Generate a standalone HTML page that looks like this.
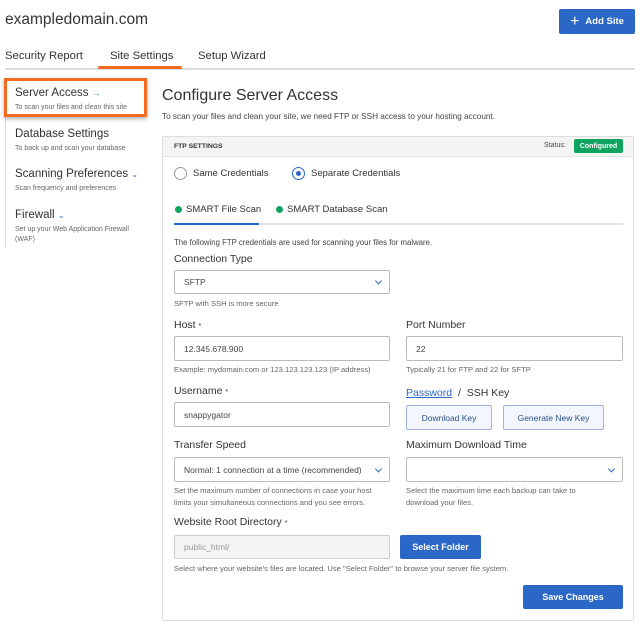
<!DOCTYPE html>
<html><head><meta charset="utf-8"><style>
*{box-sizing:border-box;margin:0;padding:0}
body{width:640px;height:625px;background:#fff;font-family:"Liberation Sans",sans-serif;color:#333;position:relative;overflow:hidden}
.a{position:absolute;white-space:nowrap}
.lbl{font-size:10.5px;color:#333}
.hint{font-size:7.6px;color:#666}
.inp{position:absolute;border:1px solid #bbb;border-radius:2px;background:#fff;font-size:8.5px;color:#444;padding-left:9px;display:flex;align-items:center}
.chev{position:absolute;right:8px;top:50%;width:5px;height:5px;border-right:1.2px solid #2b67c6;border-bottom:1.2px solid #2b67c6;transform:translateY(-70%) rotate(45deg)}
.btn{position:absolute;background:#2b67c6;color:#fff;font-size:9px;font-weight:bold;display:flex;align-items:center;justify-content:center;border-radius:2px}
.obtn{position:absolute;background:#f3f7fd;border:1px solid #9bb5e0;color:#2a4f8a;font-size:8.5px;display:flex;align-items:center;justify-content:center;border-radius:2px}
.nt{font-size:11.5px;color:#333}
.ns{font-size:7px;color:#666}
</style></head><body>
<div class="a" style="left:5px;top:11px;font-size:15.5px;color:#333">exampledomain.com</div>
<div class="btn" style="left:559px;top:9px;width:76px;height:25px;font-size:9.5px"><span style="font-size:16px;font-weight:normal;margin-right:6px">+</span>Add Site</div>
<div class="a" style="left:5px;top:50px;font-size:11.3px">Security Report</div>
<div class="a" style="left:110px;top:50px;font-size:11.3px">Site Settings</div>
<div class="a" style="left:198px;top:50px;font-size:11.3px">Setup Wizard</div>
<div class="a" style="left:5px;top:68px;width:630px;height:2px;background:#ddd"></div>
<div class="a" style="left:98px;top:66px;width:84px;height:3px;background:#f26b21;border-radius:2px"></div>
<div class="a" style="left:5px;top:117px;width:1px;height:130px;background:#ddd"></div>
<div class="a" style="left:4px;top:78px;width:143px;height:39px;border:3px solid #f26b21;box-shadow:0 2px 4px rgba(0,0,0,.3)"></div>
<div class="a nt" style="left:15px;top:87px">Server Access <span style="color:#5b86cf;font-size:9px">→</span></div>
<div class="a ns" style="left:15px;top:104px">To scan your files and clean this site</div>
<div class="a nt" style="left:15px;top:128px">Database Settings</div>
<div class="a ns" style="left:15px;top:145px">To back up and scan your database</div>
<div class="a nt" style="left:15px;top:168px">Scanning Preferences <span style="color:#2b67c6;font-size:8px">⌄</span></div>
<div class="a ns" style="left:15px;top:185px">Scan frequency and preferences</div>
<div class="a nt" style="left:15px;top:209px">Firewall <span style="color:#2b67c6;font-size:8px">⌄</span></div>
<div class="a ns" style="left:15px;top:226px">Set up your Web Application Firewall</div>
<div class="a ns" style="left:15px;top:236px">(WAF)</div>

<div class="a" style="left:162px;top:87px;font-size:16px;color:#333">Configure Server Access</div>
<div class="a" style="left:162px;top:112px;font-size:8.2px;color:#444">To scan your files and clean your site, we need FTP or SSH access to your hosting account.</div>
<div class="a" style="left:162px;top:136px;width:472px;height:485px;border:1px solid #ddd;border-radius:2px"></div>
<div class="a" style="left:163px;top:137px;width:470px;height:20px;background:#f4f4f4;border-bottom:1px solid #e2e2e2"></div>
<div class="a" style="left:174px;top:143px;font-size:6.8px;font-weight:bold;color:#333">FTP SETTINGS</div>
<div class="a" style="left:544px;top:142px;font-size:7px;color:#444">Status:</div>
<div class="a" style="left:574px;top:139px;width:49px;height:14px;background:#0ea45f;border-radius:2px;color:#fff;font-size:7px;font-weight:bold;text-align:center;line-height:15px">Configured</div>

<div class="a" style="left:174px;top:167px;width:13px;height:13px;border:1px solid #999;border-radius:50%"></div>
<div class="a" style="left:193px;top:168px;font-size:9.5px">Same Credentials</div>
<div class="a" style="left:292px;top:167px;width:13px;height:13px;border:1.5px solid #2b67c6;border-radius:50%"><div style="position:absolute;left:2.5px;top:2.5px;width:5px;height:5px;border-radius:50%;background:#2b67c6"></div></div>
<div class="a" style="left:311px;top:168px;font-size:9.5px">Separate Credentials</div>

<div class="a" style="left:175px;top:206px;width:7px;height:7px;background:#0ea45f;border-radius:50%"></div>
<div class="a" style="left:186px;top:204px;font-size:9.5px">SMART File Scan</div>
<div class="a" style="left:276px;top:206px;width:7px;height:7px;background:#0ea45f;border-radius:50%"></div>
<div class="a" style="left:287px;top:204px;font-size:9.5px">SMART Database Scan</div>
<div class="a" style="left:174px;top:223px;width:449px;height:2px;background:#e4e4e4"></div>
<div class="a" style="left:174px;top:223px;width:85px;height:2px;background:#2b67c6"></div>

<div class="a" style="left:174px;top:238px;font-size:7.8px;color:#444">The following FTP credentials are used for scanning your files for malware.</div>
<div class="a lbl" style="left:174px;top:253px">Connection Type</div>
<div class="inp" style="left:174px;top:270px;width:216px;height:24px">SFTP<span class="chev"></span></div>
<div class="a hint" style="left:174px;top:299px">SFTP with SSH is more secure</div>

<div class="a lbl" style="left:174px;top:319px">Host <span style="font-size:7px">*</span></div>
<div class="inp" style="left:174px;top:336px;width:216px;height:25px">12.345.678.900</div>
<div class="a hint" style="left:174px;top:365px">Example: mydomain.com or 123.123.123.123 (IP address)</div>
<div class="a lbl" style="left:406px;top:319px">Port Number</div>
<div class="inp" style="left:406px;top:336px;width:217px;height:25px">22</div>
<div class="a hint" style="left:406px;top:365px">Typically 21 for FTP and 22 for SFTP</div>

<div class="a lbl" style="left:174px;top:385px">Username <span style="font-size:7px">*</span></div>
<div class="inp" style="left:174px;top:402px;width:216px;height:25px">snappygator</div>
<div class="a lbl" style="left:406px;top:387px"><span style="color:#2b67c6;text-decoration:underline">Password</span> &nbsp;/ &nbsp;SSH Key</div>
<div class="obtn" style="left:406px;top:405px;width:86px;height:25px">Download Key</div>
<div class="obtn" style="left:503px;top:405px;width:101px;height:25px">Generate New Key</div>

<div class="a lbl" style="left:174px;top:439px">Transfer Speed</div>
<div class="inp" style="left:174px;top:457px;width:216px;height:25px">Normal: 1 connection at a time (recommended)<span class="chev"></span></div>
<div class="a hint" style="left:174px;top:486px">Set the maximum number of connections in case your host</div>
<div class="a hint" style="left:174px;top:498px">limits your simultaneous connections and you see errors.</div>
<div class="a lbl" style="left:406px;top:439px">Maximum Download Time</div>
<div class="inp" style="left:406px;top:457px;width:217px;height:25px"><span class="chev"></span></div>
<div class="a hint" style="left:406px;top:486px">Select the maximum time each backup can take to</div>
<div class="a hint" style="left:406px;top:498px">download your files.</div>

<div class="a lbl" style="left:174px;top:516px">Website Root Directory <span style="font-size:7px">*</span></div>
<div class="inp" style="left:174px;top:535px;width:216px;height:24px;background:#f4f4f4;color:#999;border-color:#ccc">public_html/</div>
<div class="btn" style="left:400px;top:535px;width:81px;height:24px">Select Folder</div>
<div class="a hint" style="left:174px;top:564px">Select where your website's files are located. Use "Select Folder" to browse your server file system.</div>
<div class="btn" style="left:523px;top:585px;width:100px;height:24px">Save Changes</div>
</body></html>
